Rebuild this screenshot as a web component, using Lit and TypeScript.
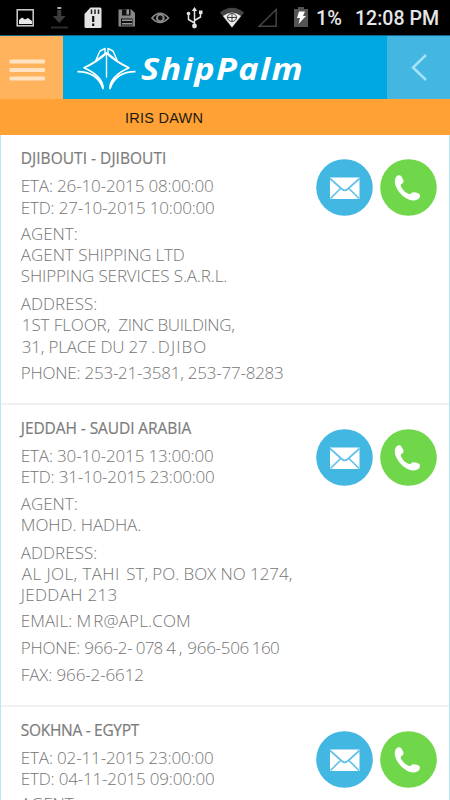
import { LitElement, html, css, svg } from "lit";
import { customElement, property } from "lit/decorators.js";

type Seg = [text: string, from: number, to: number];
interface Row { base: number; segs: Seg[]; title?: boolean }
interface Port { height: number; rows: Row[] }

const row = (base: number, ...segs: Seg[]): Row => ({ base, segs });
const title = (base: number, ...segs: Seg[]): Row => ({ base, segs, title: true });

// Row baselines are counted from the top of each card.
const PORTS: Port[] = [
  { height: 270, rows: [
    title(29, ["DJIBOUTI - DJIBOUTI", 22, 165.5]),
    row(57, ["ETA: 26-10-2015 08:00:00", 22, 213]),
    row(79, ["ETD: 27-10-2015 10:00:00", 22, 214]),
    row(105, ["AGENT:", 22, 77]),
    row(125.5, ["AGENT", 22, 73], ["SHIPPING LTD", 79.5, 184]),
    row(147, ["SHIPPING SERVICES S.A.R.L.", 22, 226.5]),
    row(175, ["ADDRESS:", 22, 96.5]),
    row(196, ["1ST FLOOR,", 23, 109.5], ["ZINC BUILDING,", 119.5, 234]),
    row(218, ["31, PLACE DU 27", 23, 147], [".", 152.5, 154], ["DJIBO", 159, 205.5]),
    row(244, ["PHONE: 253-21-3581, 253-77-8283", 22, 283]),
  ]},
  { height: 302, rows: [
    title(29, ["JEDDAH - SAUDI ARABIA", 22, 190.5]),
    row(57, ["ETA: 30-10-2015 13:00:00", 22, 213]),
    row(78, ["ETD: 31-10-2015 23:00:00", 22, 214]),
    row(105, ["AGENT:", 22, 77]),
    row(126, ["MOHD. HADHA.", 22, 140.5]),
    row(154, ["ADDRESS:", 22, 96.5]),
    row(175, ["AL JOL, TAHI", 23, 118.5], ["ST, PO. BOX NO 1274,", 127.5, 291.5]),
    row(196, ["JEDDAH 213", 22, 116.5]),
    row(222, ["EMAIL: M", 22, 90.5], ["R@APL.COM", 94.5, 190]),
    row(249, ["PHONE: 966-2-", 22, 132], ["078", 137, 162.5], ["4", 167.5, 175.5],
      [",", 180, 183], ["966-506", 188.5, 248.5], ["160", 253, 279]),
    row(276, ["FAX: 966-2-66", 22, 124], ["1", 126, 133], ["2", 135.5, 143]),
  ]},
  { height: 140, rows: [
    title(29, ["SOKHNA - EGYPT", 22, 138.5]),
    row(57, ["ETA: 02-11-2015 23:00:00", 22, 213]),
    row(78, ["ETD: 04-11-2015 09:00:00", 22, 214]),
    row(103, ["AGENT:", 22, 77]),
  ]},
];

/** One run of text fitted to a given width, by tracking or by stretching. */
@customElement("fit-text")
class FitText extends LitElement {
  @property() text = "";
  @property({ type: Number }) width = 0;
  @property({ type: Boolean }) stretch = false;
  static styles = css`
    :host { display: inline-block; white-space: pre; flex: none; }
    .run { display: inline-block; transform-origin: 0 50%; }
  `;
  render() { return html`<span class="run">${this.text}</span>`; }
  updated() {
    this.style.width = `${this.width}px`;
    const run = this.renderRoot.querySelector(".run") as HTMLElement;
    run.style.letterSpacing = this.stretch ? "" : "0";
    run.style.transform = "";
    const natural = run.getBoundingClientRect().width;
    const n = this.text.length - 1;
    if (this.stretch) run.style.transform = `scaleX(${this.width / natural})`;
    else if (n > 0) run.style.letterSpacing = `${(this.width - natural) / n}px`;
  }
}

@customElement("port-card")
class PortCard extends LitElement {
  @property({ attribute: false }) port!: Port;
  static styles = css`
    :host { display: block; }
    .card { display: flex; justify-content: space-between; box-sizing: border-box; overflow: hidden;
      border-bottom: 2px solid #f1f1f1; padding-right: 12px; }
    .row { display: flex; height: 20px; color: #757575;
      font: 350 17px/20px "Open Sans", "Noto Sans", sans-serif; }
    .title { font-size: 15.5px; font-weight: 400; color: #7c7c7c; -webkit-text-stroke: .2px #7c7c7c; }
    .actions { display: flex; gap: 7px; padding-top: 24px; }
    svg { display: block; }
  `;
  render() {
    let y = 0;
    return html`<section class="card" style="height:${this.port.height}px">
      <div>${this.port.rows.map((r) => {
        const top = r.base - 16;
        const gap = top - y;
        y = top + 20;
        let x = 1;
        return html`<div class="row ${r.title ? "title" : ""}" style="margin-top:${gap}px">${r.segs.map(([t, a, b]) => {
          const left = a - 1.2, w = b - a + 2, m = left - x;
          x = left + w;
          return html`<fit-text style="margin-left:${m}px" .text=${t} .width=${w}></fit-text>`;
        })}</div>`;
      })}</div>
      <div class="actions">
        <svg width="57" height="57" viewBox="0 0 57 57">
          <circle cx="28.5" cy="28.5" r="28.3" fill="#42b7e2"/>
          <rect x="14" y="18.500" width="29.500" height="21.500" fill="#fff"/>
          <path d="M14 19.500l11.800 10.500q3 2.600 6 0L43.500 19.500M14.500 39.500l10.500-10.500M43 39.500L32.500 29" fill="none" stroke="#62c2e7" stroke-width="1.700"/>
        </svg>
        <svg width="57" height="57" viewBox="0 0 57 57">
          <circle cx="28.5" cy="28.5" r="28.3" fill="#70d64a"/>
          <path d="M17.500 16.500q3.500-1.500 5 3 2.500 4-1 5.500-1.500 1 0 3.500 3 5 7.500 6.500 1.500.5 3-1.500 4-1 7.500 1.500 1.500 3.500-2 5.500-5 2.500-11-1-9-5.500-11.500-14.500-1-6 2.500-8.500z" fill="#fff"/>
        </svg>
      </div>
    </section>`;
  }
}

const statusIcons = svg`
  <rect x="17.200" y="9.800" width="16" height="16" fill="none" stroke="#d0d0d0" stroke-width="1.500"/>
  <path d="M19 24v-4l3-2.500 3 2 3-1.500 4 3v3z" fill="#e8e8e8"/>
  <path d="M57.300 7h4v2h-4z" fill="#aaa"/><path d="M57.300 10h4v6h4.500l-6.500 7-6.500-7h4.500z" fill="#3c3c3c"/><path d="M51 26.500h17v2H51z" fill="#2c2c2c"/>
  <path d="M90.500 7.500H100q1.500 0 1.500 1.500v17.500q0 1.500-1.500 1.500H86q-1.500 0-1.500-1.500V14z" fill="#e4e4e4"/>
  <path d="M91.500 9.500v4.500M95 9.500v4.500M98.500 9.500v4.500" stroke="#222" stroke-width="1.500"/><path d="M93.200 16v6M93.200 23.500v2.500" stroke="#111" stroke-width="2.200"/>
  <path d="M118.500 9.500h13l3.500 3.500v13.500h-16.500z" fill="#858585"/><path d="M122 9.500h8.500v6H122zM121 18.500h11.500v7H121z" fill="#111"/><path d="M126.500 9.500h2.500v5h-2.500zM122 19.500h10v1.500h-10zM122 23h10v1.500h-10z" fill="#999"/>
  <path d="M152 18q8-9.500 16.500 0-8.500 9-16.500 0z" fill="none" stroke="#8c8c8c" stroke-width="1.700"/><circle cx="160.300" cy="18" r="3.400" fill="#111" stroke="#8c8c8c" stroke-width="2"/>
  <path d="M194.500 26V9M194.500 23l-6-3.500V14M194.500 20.500l6-3.500V12" fill="none" stroke="#e4e4e4" stroke-width="1.500"/><circle cx="194.500" cy="26" r="2.400" fill="#e4e4e4"/><circle cx="188.500" cy="13.500" r="1.800" fill="#e4e4e4"/><path d="M199 10.500h3.500V14H199zM191.800 11l2.700-4 2.700 4z" fill="#e4e4e4"/>
  <path d="M219.800 12.500q12.200-9.500 24.400 0L232 27.500z" fill="#444"/><path d="M223 16q9-7 18 0l-9 11.500z" fill="#ececec"/>
  <g fill="none" stroke="#333" stroke-width=".900"><ellipse cx="232" cy="17.500" rx="4.500" ry="4"/><path d="M227 17.500h10M232 13.500v8"/></g>
  <path d="M276.200 9.500v16.700h-17z" fill="none" stroke="#444" stroke-width="1.500"/>
  <path d="M294 9h4V7h6v2h4v18h-14z" fill="#545454"/><path d="M299 11.500h6l-2 4.500h3l-7.500 8 1.500-6h-3z" fill="#fff"/>`;

@customElement("app-root")
class AppRoot extends LitElement {
  static styles = css`
    :host { display: block; width: 450px; height: 800px; overflow: hidden; background: #fff; }
    svg { display: block; flex: none; }
    .status { display: flex; height: 35px; background: #000; color: #e6e6e6;
      font: 500 20px/37px Roboto, sans-serif; border-bottom: 1px solid #12678a; }
    .pct { margin-left: 6px; }
    .time { margin-left: 13px; }
    .header { display: flex; height: 63px; background: #00a8e1; }
    .menu { width: 63px; background: #ffb35c; }
    .brand { display: flex; flex: 1; }
    .name { margin-left: 5px; color: #fff; letter-spacing: 1.2px;
      font: italic 680 30px/65px "Open Sans", "Noto Sans", sans-serif; }
    .back { width: 63px; background: #44b6e2; }
    .vessel { height: 36px; background: #ffa135; color: #211a10; padding-left: 125px;
      font: 14.5px/38px "Liberation Sans", Arial, sans-serif; }
    .page { box-sizing: border-box; border: solid #b3e8f8; border-width: 0 1px; height: 665px; overflow: hidden; }
  `;
  render() {
    return html`
      <div class="status"><svg width="310" height="35">${statusIcons}</svg>
        <fit-text class="pct" stretch .text=${"1%"} .width=${26}></fit-text>
        <fit-text class="time" stretch .text=${"12:08 PM"} .width=${84}></fit-text></div>
      <div class="header">
        <div class="menu"><svg width="63" height="63"><g fill="#ffe3c3"><rect x="9.500" y="23.500" width="35.500" height="4" rx="1"/><rect x="9.500" y="32" width="35.500" height="4" rx="1"/><rect x="9.500" y="40.500" width="35.500" height="4" rx="1"/></g></svg></div>
        <div class="brand">
          <svg width="73" height="63" viewBox="63 36 73 63"><g fill="none" stroke="#fff" stroke-width="1.800" stroke-linejoin="round">
            <path d="M77.500 71.700q19.500 0 25.500 16.800.3-12-19-20.800Q97 62 106.500 53 116 62 129 67.700q-19.300 8.800-19 20.800 6-16.800 25.500-16.800"/>
            <path d="M106.500 54v23.500" stroke-width="1.400"/>
            <path d="M95.500 61l4.500-10 5-2.500v5l-9.500 7.500M117.500 61L113 51l-5-2.500v5l9.500 7.500" stroke-width="1.400"/></g></svg>
          <fit-text class="name" stretch .text=${"ShipPalm"} .width=${163}></fit-text>
        </div>
        <div class="back"><svg width="63" height="63"><path d="M39 19L26 31.500 39 44" fill="none" stroke="#a5e3fa" stroke-width="2.500"/></svg></div>
      </div>
      <div class="vessel"><fit-text .text=${"IRIS DAWN"} .width=${78}></fit-text></div>
      <div class="page">${PORTS.map((p) => html`<port-card .port=${p}></port-card>`)}</div>`;
  }
}
